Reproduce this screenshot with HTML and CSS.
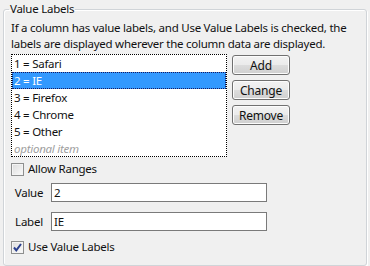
FILE: index.html
```html
<!DOCTYPE html>
<html lang="en">
<head>
  <meta charset="UTF-8" />
  <title>Value Labels</title>
  <link rel="stylesheet" href="styles.css">
</head>
<body>

  <fieldset class="group">
    <legend>Value Labels</legend>

    <p class="hint">If a column has value labels, and Use Value Labels is checked, the<br>labels are displayed wherever the column data are displayed.</p>

    <div class="list-row">
      <ul class="list">
        <li>1 = Safari</li>
        <li class="selected">2 = IE</li>
        <li>3 = Firefox</li>
        <li>4 = Chrome</li>
        <li>5 = Other</li>
        <li class="placeholder">optional item</li>
      </ul>
      <div class="buttons">
        <button>Add</button>
        <button>Change</button>
        <button>Remove</button>
      </div>
    </div>

    <label class="check">
      <span class="box"></span>
      Allow Ranges
    </label>

    <div class="field">
      <span class="field-label">Value</span>
      <input type="text" value="2">
    </div>

    <div class="field field-second">
      <span class="field-label">Label</span>
      <input type="text" value="IE">
    </div>

    <label class="check check-last">
      <span class="box">
        <svg width="11" height="11" viewBox="0 0 11 11">
          <path d="M2 5.5 L4.3 8.3 L9 2" fill="none" stroke="#2a3f8e" stroke-width="2"/>
        </svg>
      </span>
      Use Value Labels
    </label>
  </fieldset>

</body>
</html>
```

FILE: styles.css
```css
body {
  margin: 0;
  background-color: #f0f0f0;
  font-family: 'Noto Sans', 'Open Sans', sans-serif;
  font-size: 11.5px;
  letter-spacing: -0.25px;
  line-height: 16px;
  color: #111;
  overflow: hidden;
}

.group {
  box-sizing: border-box;
  height: 265px;
  margin: 1px 3px 0 3px;
  padding: 3px 8px 0 7px;
  border: 1px solid #d0d4d8;
  border-radius: 3px;
  box-shadow: inset 1px 1px 0 #fff, 1px 1px 0 #fff;
}

.group legend {
  padding: 0 1px;
  margin-left: -2px;
  line-height: 16px;
}

.hint {
  margin: 0;
  white-space: nowrap;
}

.list-row {
  display: flex;
  gap: 5px;
  margin-top: 2px;
}

.list {
  box-sizing: border-box;
  width: 216px;
  height: 103px;
  margin: 0;
  padding: 0;
  list-style: none;
  background-color: #fff;
  border: 1px dotted #000;
  overflow: hidden;
}

.list li {
  height: 17px;
  line-height: 17px;
  padding-left: 2px;
}

.list li.selected {
  background-color: #3399ff;
  color: #fff;
  outline: 1px dotted #1a1a60;
  outline-offset: -1px;
}

.list li.placeholder {
  color: #a0a0a0;
  font-style: italic;
}

.buttons {
  display: flex;
  flex-direction: column;
  gap: 5px;
  padding-top: 1px;
}

.buttons button {
  box-sizing: border-box;
  width: 58px;
  height: 20px;
  padding: 0;
  font-family: inherit;
  font-size: 12px;
  letter-spacing: -0.2px;
  color: #111;
  border: 1px solid #707070;
  border-radius: 3px;
  background: linear-gradient(#f2f2f2, #ebebeb 50%, #dddddd 50%, #cfcfcf);
  box-shadow: inset 0 0 0 1px #fcfcfc;
}

.check {
  display: flex;
  align-items: center;
  gap: 4px;
  margin-top: 4px;
  height: 16px;
}

.check-last {
  margin-top: 8px;
}

.box {
  box-sizing: border-box;
  display: flex;
  align-items: center;
  justify-content: center;
  width: 13px;
  height: 13px;
  border: 1px solid #8e8f8f;
  background: linear-gradient(135deg, #dcdcdc, #fbfbfb);
  box-shadow: inset 0 0 0 1px #f4f4f4;
}

.field {
  display: flex;
  align-items: center;
  gap: 4px;
  margin-top: 6px;
}

.field-second {
  margin-top: 10px;
}

.field-label {
  width: 36px;
  text-align: center;
}

.field input {
  box-sizing: border-box;
  width: 216px;
  height: 19px;
  margin: 0;
  padding: 0 2px;
  font-family: inherit;
  font-size: 11.5px;
  letter-spacing: -0.25px;
  color: #111;
  border: 1px solid #7a7a7a;
  background-color: #fff;
  outline: none;
}
```
